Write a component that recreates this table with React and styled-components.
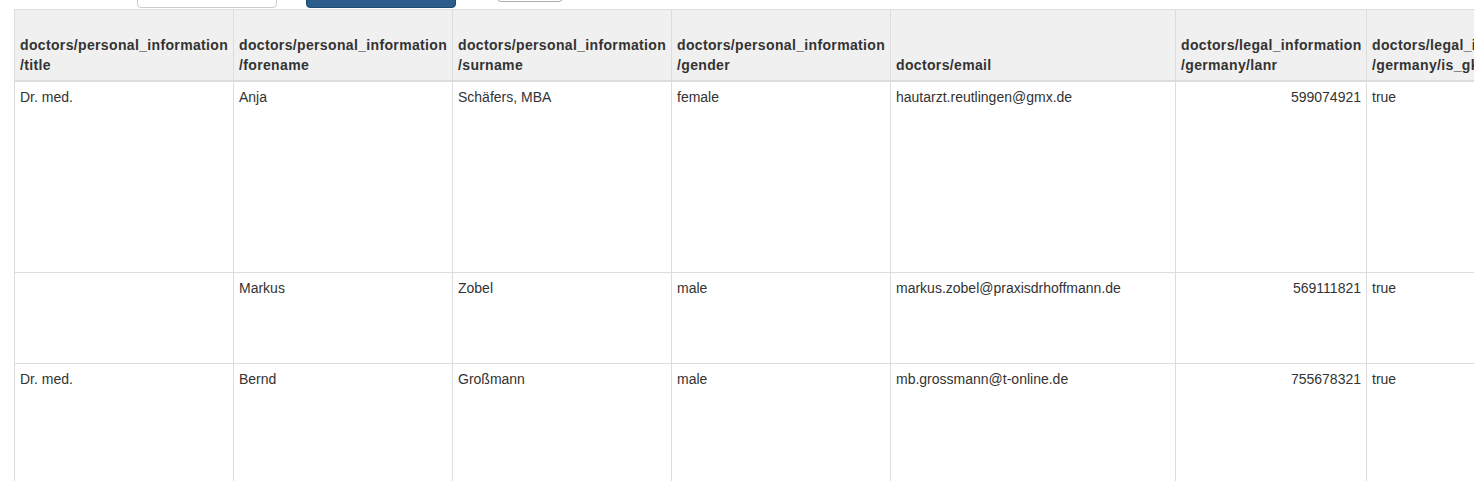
import React from "react";
import styled, { createGlobalStyle } from "styled-components";

const Global = createGlobalStyle`
  html, body { margin: 0; padding: 0; overflow: hidden; background: #fff; }
  body { font-family: "Liberation Sans", Arial, sans-serif; font-size: 14px; color: #333; }
`;

const Page = styled.div`
  padding-left: 14px;
  width: 2400px;
`;

const Toolbar = styled.div`
  height: 9px;
  display: flex;
  align-items: flex-end;
`;

const SearchInput = styled.input`
  box-sizing: border-box;
  margin-left: 123px;
  width: 140px;
  height: 34px;
  margin-bottom: 1px;
  border: 1px solid #ccc;
  border-radius: 4px;
  background: #fff;
  flex: none;
`;

const Button = styled.button`
  box-sizing: border-box;
  flex: none;
  margin-left: ${(p) => p.$gap}px;
  width: ${(p) => p.$w}px;
  height: ${(p) => p.$h}px;
  margin-bottom: ${(p) => p.$mb}px;
  border-radius: 4px;
  border: 1px solid ${(p) => (p.$primary ? "#1f4a70" : "#adadad")};
  background: ${(p) => (p.$primary ? "#2a5d8b" : "#fff")};
`;

const Table = styled.table`
  border-collapse: collapse;
  table-layout: fixed;
  font-size: 14px;
  line-height: 20px;
  color: #333;
`;

const Th = styled.th`
  background: #f0f0f0;
  border: 1px solid #ddd;
  border-bottom: 2px solid #ddd;
  padding: 5px;
  height: 60px;
  vertical-align: bottom;
  text-align: left;
  font-weight: bold;
  letter-spacing: 0.35px;
  white-space: nowrap;
  overflow: hidden;
`;

const Td = styled.td`
  border: 1px solid #ddd;
  padding: 5px;
  vertical-align: top;
  text-align: ${(p) => (p.$num ? "right" : "left")};
  white-space: nowrap;
  overflow: hidden;
`;

const Tr = styled.tr`
  height: ${(p) => p.$h}px;
`;

const columns = [
  { w: 219, a: "doctors/personal_information", b: "/title", key: "title" },
  { w: 219, a: "doctors/personal_information", b: "/forename", key: "forename" },
  { w: 219, a: "doctors/personal_information", b: "/surname", key: "surname" },
  { w: 219, a: "doctors/personal_information", b: "/gender", key: "gender" },
  { w: 285, a: "doctors/email", key: "email" },
  { w: 191, a: "doctors/legal_information", b: "/germany/lanr", key: "lanr", num: true },
  { w: 219, a: "doctors/legal_information", b: "/germany/is_gkv", key: "gkv" },
  { w: 219, a: "doctors/legal_information", b: "/germany/bsnr", key: "bsnr" },
];

const tableWidth = columns.reduce((s, c) => s + c.w, 0);

const rows = [
  { h: 191, title: "Dr. med.", forename: "Anja", surname: "Schäfers, MBA", gender: "female", email: "hautarzt.reutlingen@gmx.de", lanr: "599074921", gkv: "true", bsnr: "" },
  { h: 91, title: "", forename: "Markus", surname: "Zobel", gender: "male", email: "markus.zobel@praxisdrhoffmann.de", lanr: "569111821", gkv: "true", bsnr: "" },
  { h: 191, title: "Dr. med.", forename: "Bernd", surname: "Großmann", gender: "male", email: "mb.grossmann@t-online.de", lanr: "755678321", gkv: "true", bsnr: "" },
];

export default function App() {
  return (
    <Page>
      <Global />
      <Toolbar>
        <SearchInput type="text" />
        <Button $primary $gap={29} $w={150} $h={34} $mb={1} />
        <Button $gap={41} $w={66} $h={30} $mb={7} />
      </Toolbar>
      <Table style={{ width: tableWidth }}>
        <colgroup>
          {columns.map((c) => (
            <col key={c.key} style={{ width: c.w }} />
          ))}
        </colgroup>
        <thead>
          <tr>
            {columns.map((c) => (
              <Th key={c.key}>
                {c.b ? (
                  <>
                    {c.a}
                    <br />
                    {c.b}
                  </>
                ) : (
                  c.a
                )}
              </Th>
            ))}
          </tr>
        </thead>
        <tbody>
          {rows.map((r, i) => (
            <Tr key={i} $h={r.h}>
              {columns.map((c) => (
                <Td key={c.key} $num={c.num}>
                  {r[c.key]}
                </Td>
              ))}
            </Tr>
          ))}
        </tbody>
      </Table>
    </Page>
  );
}
